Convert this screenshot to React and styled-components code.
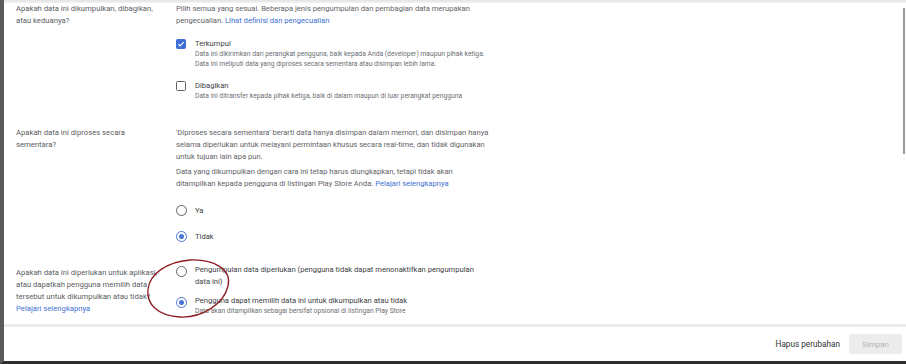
import React from 'react';
import styled, { createGlobalStyle } from 'styled-components';

const GlobalStyle = createGlobalStyle`
  html, body {
    margin: 0;
    padding: 0;
    background: #fff;
  }
  body {
    font-family: Roboto, "Liberation Sans", sans-serif;
    -webkit-font-smoothing: antialiased;
  }
`;

const Frame = styled.div`
  position: relative;
  width: 902px;
  height: 361px;
  border-left: 4px solid #5a5a5a;
  border-bottom: 3px solid #2e2e2e;
  display: flex;
  flex-direction: column;
  overflow: hidden;
  background: #fff;
`;

const TopShade = styled.div`
  height: 3px;
  flex: none;
  background: linear-gradient(#e3e3e3, #f3f3f3);
`;

const Content = styled.div`
  flex: 1;
  display: flex;
  flex-direction: column;
`;

const Row = styled.section`
  display: grid;
  grid-template-columns: 160px 1fr;
  padding-left: 12px;
  margin-top: ${p => p.$top || 0}px;
`;

const Question = styled.div`
  font-size: 7.7px;
  line-height: 12px;
  color: #5a5d61;
  white-space: nowrap;
  padding-top: ${p => p.$offset || 0}px;
`;

const Answer = styled.div`
  display: flex;
  flex-direction: column;
`;

const Para = styled.p`
  margin: ${p => p.$top || 0}px 0 0;
  font-size: 7.6px;
  line-height: 12px;
  color: #5f6368;
  white-space: nowrap;
`;

const Link = styled.a`
  color: #3f6fd1;
  text-decoration: none;
`;

const Option = styled.label`
  display: grid;
  grid-template-columns: 10px 1fr;
  column-gap: 9px;
  align-items: start;
  margin-top: ${p => p.$top || 0}px;
`;

const Box = styled.span`
  box-sizing: border-box;
  width: 10px;
  height: 10px;
  margin-top: ${p => p.$nudge || 1}px;
  border-radius: 1.5px;
  display: flex;
  align-items: center;
  justify-content: center;
  background: ${p => (p.$checked ? '#3f6fd6' : '#fff')};
  border: 1.2px solid ${p => (p.$checked ? '#3f6fd6' : '#5f6368')};
`;

const Radio = styled.span`
  box-sizing: border-box;
  width: 11px;
  height: 11px;
  margin-top: ${p => p.$nudge || 0.5}px;
  border-radius: 50%;
  display: flex;
  align-items: center;
  justify-content: center;
  border: 1.2px solid ${p => (p.$checked ? '#4a76d6' : '#5f6368')};

  &::after {
    content: '';
    width: 5px;
    height: 5px;
    border-radius: 50%;
    background: ${p => (p.$checked ? '#4a76d6' : 'transparent')};
  }
`;

const OptionText = styled.div`
  display: flex;
  flex-direction: column;
`;

const Label = styled.span`
  font-size: 7.6px;
  line-height: 12px;
  color: #3c4043;
  white-space: nowrap;
`;

const Hint = styled.span`
  font-size: 6.75px;
  line-height: 9.6px;
  color: #6b6f74;
  white-space: nowrap;
`;

const Footer = styled.footer`
  flex: none;
  height: 34px;
  border-top: 3px solid #ebebeb;
  display: flex;
  align-items: center;
  justify-content: flex-end;
  gap: 9px;
  padding-right: 4px;
`;

const TextButton = styled.button`
  border: none;
  background: none;
  padding: 0;
  font-family: Roboto, "Liberation Sans", sans-serif;
  font-size: 8.2px;
  font-weight: 400;
  color: #2f3134;
`;

const SaveButton = styled.button`
  width: 53px;
  height: 20px;
  border: none;
  border-radius: 2px;
  background: #ececec;
  color: #b3b3b3;
  font-family: Roboto, "Liberation Sans", sans-serif;
  font-size: 8px;
`;

const Scrollbar = styled.div`
  position: absolute;
  right: 1px;
  top: 8px;
  width: 2px;
  height: 146px;
  background: #9a9a9a;
`;

const Annotation = styled.svg`
  position: absolute;
  left: 136px;
  top: 256px;
  pointer-events: none;
`;

const Check = () => (
  <svg width="8" height="8" viewBox="0 0 24 24">
    <path d="M4 12.5l5 5L20 6.5" fill="none" stroke="#fff" strokeWidth="3.4" />
  </svg>
);

export default function App() {
  return (
    <>
      <GlobalStyle />
      <Frame>
        <TopShade />
        <Content>
          <Row>
            <Question>
              Apakah data ini dikumpulkan, dibagikan,<br />atau keduanya?
            </Question>
            <Answer>
              <Para>
                Pilih semua yang sesuai. Beberapa jenis pengumpulan dan pembagian data merupakan<br />
                pengecualian. <Link>Lihat definisi dan pengecualian</Link>
              </Para>
              <Option $top={11}>
                <Box $checked><Check /></Box>
                <OptionText>
                  <Label>Terkumpul</Label>
                  <Hint>Data ini dikirimkan dari perangkat pengguna, baik kepada Anda (developer) maupun pihak ketiga.</Hint>
                  <Hint>Data ini meliputi data yang diproses secara sementara atau disimpan lebih lama.</Hint>
                </OptionText>
              </Option>
              <Option $top={11}>
                <Box />
                <OptionText>
                  <Label>Dibagikan</Label>
                  <Hint>Data ini ditransfer kepada pihak ketiga, baik di dalam maupun di luar perangkat pengguna</Hint>
                </OptionText>
              </Option>
            </Answer>
          </Row>

          <Row $top={25}>
            <Question>
              Apakah data ini diproses secara<br />sementara?
            </Question>
            <Answer>
              <Para>
                'Diproses secara sementara' berarti data hanya disimpan dalam memori, dan disimpan hanya<br />
                selama diperlukan untuk melayani permintaan khusus secara real-time, dan tidak digunakan<br />
                untuk tujuan lain apa pun.
              </Para>
              <Para $top={3}>
                Data yang dikumpulkan dengan cara ini tetap harus diungkapkan, tetapi tidak akan<br />
                ditampilkan kepada pengguna di listingan Play Store Anda. <Link>Pelajari selengkapnya</Link>
              </Para>
              <Option $top={15}>
                <Radio />
                <Label>Ya</Label>
              </Option>
              <Option $top={14}>
                <Radio $checked />
                <Label>Tidak</Label>
              </Option>
            </Answer>
          </Row>

          <Row $top={21}>
            <Question $offset={3}>
              Apakah data ini diperlukan untuk aplikasi,<br />
              atau dapatkah pengguna memilih data<br />
              tersebut untuk dikumpulkan atau tidak?<br />
              <Link>Pelajari selengkapnya</Link>
            </Question>
            <Answer>
              <Option>
                <Radio $nudge={2.5} />
                <Label>
                  Pengumpulan data diperlukan (pengguna tidak dapat menonaktifkan pengumpulan<br />data ini)
                </Label>
              </Option>
              <Option $top={7}>
                <Radio $checked $nudge={2} />
                <OptionText>
                  <Label>Pengguna dapat memilih data ini untuk dikumpulkan atau tidak</Label>
                  <Hint>Data akan ditampilkan sebagai bersifat opsional di listingan Play Store</Hint>
                </OptionText>
              </Option>
            </Answer>
          </Row>
        </Content>
        <Footer>
          <TextButton>Hapus perubahan</TextButton>
          <SaveButton disabled>Simpan</SaveButton>
        </Footer>
        <Scrollbar />
        <Annotation width="96" height="66" viewBox="0 0 96 66">
          <path
            d="M50 4 C75 3 92 14 88 30 C84 48 62 62 40 61 C18 60 6 48 8 33 C10 18 26 6 50 4 Z"
            fill="none"
            stroke="#8c1c22"
            strokeWidth="1.3"
          />
        </Annotation>
      </Frame>
    </>
  );
}
